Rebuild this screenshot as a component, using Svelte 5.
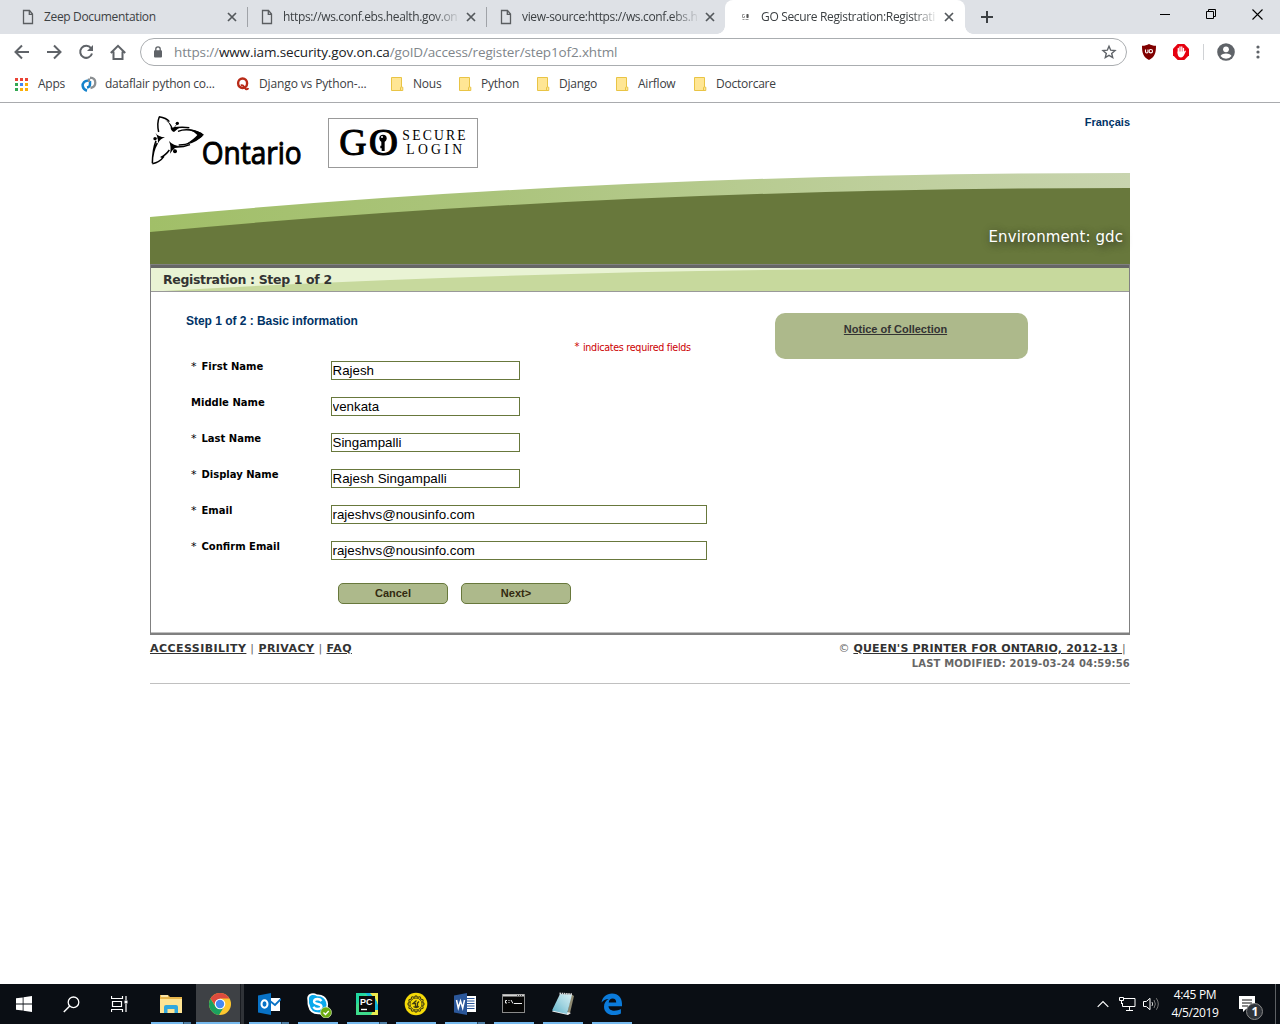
<script>
  const tabs = [
    { title: 'Zeep Documentation' },
    { title: 'https://ws.conf.ebs.health.gov.on' },
    { title: 'view-source:https://ws.conf.ebs.h' },
    { title: 'GO Secure Registration:Registrati', active: true }
  ];
  const folders = ['Nous', 'Python', 'Django', 'Airflow', 'Doctorcare'];
  const fields = [
    { label: 'First Name', required: true, value: 'Rajesh' },
    { label: 'Middle Name', required: false, value: 'venkata' },
    { label: 'Last Name', required: true, value: 'Singampalli' },
    { label: 'Display Name', required: true, value: 'Rajesh Singampalli' },
    { label: 'Email', required: true, value: 'rajeshvs@nousinfo.com', wide: true },
    { label: 'Confirm Email', required: true, value: 'rajeshvs@nousinfo.com', wide: true }
  ];
  const appDots = ['#ea4335', '#ea4335', '#ea4335', '#34a853', '#4285f4', '#fbaf08', '#34a853', '#fbaf08', '#fbaf08'];
  const rays = [0, 30, 60, 90, 120, 150, 180, 210, 240, 270, 300, 330];
</script>

<div class="screen">
  <header class="tabstrip">
    {#each tabs as tab}
      <div class="tab" class:active={tab.active}>
        {#if tab.active}
          <svg class="favicon" width="12" height="16" viewBox="0 0 12 16"><g fill="none" stroke="#999" stroke-width="1"><path d="M5.500 5.500H3.500v3H5.500V7M7.500 5.500h2v3h-2zM3.500 10.500h2m1 0h3" /></g><path d="M8 5h1v4H8z" fill="#555" /></svg>
        {:else}
          <svg class="favicon" width="12" height="16" viewBox="0 0 12 16"><path d="M1.500 1.500h6l3 3.500v9.500h-9zM7.300 1.800v3.500h3.200" fill="none" stroke="#5a5d60" stroke-width="1.300" /></svg>
        {/if}
        <span class="tab-title" class:long={tab.title.length > 30}>{tab.title}</span>
        <svg class="tab-close" width="10" height="10" viewBox="0 0 10 10"><path d="M1 1l8 8M9 1l-8 8" stroke="#54585c" stroke-width="1.700" /></svg>
      </div>
    {/each}
    <svg class="new-tab" width="14" height="14" viewBox="0 0 14 14"><path d="M7 1v12M1 7h12" stroke="#3c4043" stroke-width="2" /></svg>
    <div class="window-controls">
      <svg width="11" height="11" viewBox="0 0 11 11"><path d="M0 5.500h10" stroke="#000" /></svg>
      <svg width="11" height="11" viewBox="0 0 11 11"><path d="M.5 2.500h7v7h-7zM2.500 2.500v-2h7v7h-2" fill="none" stroke="#000" /></svg>
      <svg width="11" height="11" viewBox="0 0 11 11"><path d="M.5.5l10 10M10.500.5l-10 10" stroke="#000" stroke-width="1.100" /></svg>
    </div>
  </header>

  <div class="toolbar">
    <svg width="16" height="16" viewBox="0 0 16 16"><path d="M15 8H2M8 1.500L1.500 8 8 14.500" class="nav" /></svg>
    <svg width="16" height="16" viewBox="0 0 16 16"><path d="M1 8h13M8 1.500L14.500 8 8 14.500" class="nav" /></svg>
    <svg width="16" height="16" viewBox="0 0 16 16"><path d="M13 4.200A6 6 0 1 0 14 9.500" class="nav" /><path d="M15 1v6H9z" fill="#5f6368" /></svg>
    <svg width="16" height="16" viewBox="0 0 16 16"><path d="M.8 9L8 1.800 15.200 9M3.500 7.500V15h9V7.500" class="nav" /></svg>
    <div class="omnibox">
      <svg width="10" height="12" viewBox="0 0 10 12"><rect x="1" y="4.300" width="8" height="7.200" rx="1" fill="#5f6368" /><path d="M2.800 5V3a2.200 2.200 0 0 1 4.400 0v2" fill="none" stroke="#5f6368" stroke-width="1.300" /></svg>
      <span class="url">https://<b>www.iam.security.gov.on.ca</b>/goID/access/register/step1of2.xhtml</span>
      <svg class="star" width="16" height="16" viewBox="0 0 16 16"><path d="M8 2.200l1.700 4 4.300.4-3.300 2.800 1 4.200L8 11.400l-3.700 2.200 1-4.200L2 6.600l4.300-.4z" fill="none" stroke="#5f6368" stroke-width="1.400" /></svg>
    </div>
    <div class="extensions">
      <svg width="16" height="16" viewBox="0 0 16 16"><path d="M8 0c2 1.200 4 1.700 7 1.800 0 7-1 11.200-7 14.200C2 13 1 8.800 1 1.800 4 1.700 6 1.200 8 0z" fill="#800000" /><path d="M4.500 5.500v2.300q0 1.200 1.300 1.200T7 7.800V5.500" fill="none" stroke="#fff" stroke-width="1.100" /><circle cx="9.800" cy="7.200" r="1.700" fill="none" stroke="#fff" stroke-width="1.100" /></svg>
      <svg width="16" height="16" viewBox="0 0 16 16"><path d="M4.700 0h6.600L16 4.700v6.600L11.300 16H4.700L0 11.300V4.700z" fill="#e6000f" /><path d="M5.300 9V4.500M7 8V3M8.800 8V3M10.500 9V4.500" stroke="#fff" stroke-width="1.300" stroke-linecap="round" /><path d="M4.600 7.500h6.600l1.200-1q.9.300.3 1.300l-2 4q-1 1.600-2.700 1.600-3 0-3.400-4z" fill="#fff" /></svg>
      <i class="divider"></i>
      <svg width="18" height="18" viewBox="0 0 18 18"><circle cx="9" cy="9" r="8.800" fill="#5f6368" /><circle cx="9" cy="6.300" r="2.900" fill="#fff" /><path d="M3.500 13q1-2.500 5.500-2.500t5.500 2.500q-2 2.700-5.500 2.700T3.500 13z" fill="#fff" /></svg>
      <svg width="4" height="14" viewBox="0 0 4 14"><g fill="#5f6368"><circle cx="2" cy="2" r="1.600" /><circle cx="2" cy="7" r="1.600" /><circle cx="2" cy="12" r="1.600" /></g></svg>
    </div>
  </div>

  <nav class="bookmarks">
    <div class="bookmark apps">
      <span class="grid">{#each appDots as color}<svg width="3" height="3"><rect width="3" height="3" fill={color} /></svg>{/each}</span>
      <span>Apps</span>
    </div>
    <div class="bookmark flair">
      <svg width="16" height="16" viewBox="0 0 16 16"><path d="M7 4.700A4.700 4.700 0 0 0 1.700 10Q2.200 13.500 6 14.800M6 11.500q3-.5 3-3.300V5" fill="none" stroke="#1583cc" stroke-width="2.500" /><path d="M9 1.700q5.300.3 5.300 5 0 4.300-4.800 5.300M8 2.500v3.500" fill="none" stroke="#8b8f92" stroke-width="2.300" /></svg>
      <span>dataflair python co...</span>
    </div>
    <div class="bookmark quora">
      <svg width="14" height="16" viewBox="0 0 14 16"><ellipse cx="6.600" cy="7.300" rx="4.500" ry="4.800" fill="none" stroke="#b92b18" stroke-width="2.400" /><path d="M4.800 9.500q2-.8 3.400 1.600 1.200 2.200 2.500 2.200 1.200 0 1.500-1.300" fill="none" stroke="#b92b18" stroke-width="1.900" /></svg>
      <span>Django vs Python-...</span>
    </div>
    {#each folders as name}
      <div class="bookmark folder {name.toLowerCase()}">
        <svg width="13" height="14" viewBox="0 0 13 14"><path d="M.5.5h10v9.700h1.300v3.300H.5z" fill="#ffe694" stroke="#e9c445" /><path d="M9.500 13v-2.500q.3-.8 1-.8" fill="none" stroke="#e9c445" /></svg>
        <span>{name}</span>
      </div>
    {/each}
  </nav>

  <main class="viewport">
    <div class="page">
      <div class="masthead">
        <svg class="logos" width="330" height="53" viewBox="30 33 990 159">
          <g fill="none" stroke="#000" stroke-width="4.500">
            <path d="M58 38q-8 20-2 46M57 38q22 3 31 15" />
            <path d="M100 72q22-4 48-1M114 82q32-12 72 8" />
            <path d="M116 123q36 1 70-27M104 129q22 2 46-7" />
            <path d="M48 110q-10 25-11 68M52 117q-15 25-15 60M37 179q22-4 35-22M62 160q15-6 26-22" />
          </g>
          <path d="M140 74q36 4 52 18-20 19-54 28 24-15 34-27-12-12-32-19z" />
          <path d="M76 48q16 8 22 23 12 2 24-2-12 7-20 15-11-5-10-16-4-12-16-20zM46 86q9 13 29 14-15 5-21 18 1-19-8-32zM87 111q13 15 35 16-20 1-32 22 5-19-3-38z" />
          <circle cx="112" cy="58" r="5" /><circle cx="45" cy="104" r="5" /><circle cx="105" cy="142" r="6" />
          <path d="M112 58l-10 14M45 104l17-4M105 142l-8-15" stroke="#000" stroke-width="2" />
          <text x="185" y="181" class="ontario" textLength="300" lengthAdjust="spacingAndGlyphs">Ontario</text>
          <rect x="565.500" y="43.500" width="447" height="147" fill="#fff" stroke="#999" stroke-width="3" />
          <text x="598" y="154" class="go" textLength="82" lengthAdjust="spacingAndGlyphs">G</text>
          <text x="686" y="154" class="go" textLength="88" lengthAdjust="spacingAndGlyphs">O</text>
          <circle cx="729" cy="103" r="11" /><path d="M724 103h10v38h-9v-8h-4v-8h3z" /><circle cx="726" cy="99" r="3" fill="#fff" />
          <text x="787" y="109" class="trajan" textLength="190">SECURE</text>
          <text x="799" y="151" class="trajan" textLength="167">LOGIN</text>
        </svg>
        <a class="lang" href="#fr">Français</a>
      </div>

      <div class="banner">
        <svg width="980" height="91" viewBox="0 0 980 91">
          <defs>
            <linearGradient id="sweep"><stop offset="0" stop-color="#a1bf68" /><stop offset=".35" stop-color="#abc47c" /><stop offset=".75" stop-color="#becf9c" /><stop offset="1" stop-color="#c8d4af" /></linearGradient>
          </defs>
          <path d="M0 44Q470 0 980 0V91H0z" fill="url(#sweep)" />
          <path d="M0 59Q470 15 980 15V91H0z" fill="#68783c" />
        </svg>
        <span class="environment">Environment: gdc</span>
      </div>

      <section class="panel">
        <div class="panel-title">
          <svg width="978" height="23" viewBox="0 0 978 23" preserveAspectRatio="none"><path d="M0 0H709V1Q340 4 12 23H0z" fill="#e9f3d4" /></svg>
          <h1>Registration : Step 1 of 2</h1>
        </div>
        <div class="panel-body">
          <div class="form">
            <h2>Step 1 of 2 : Basic information</h2>
            <p class="required-note"><sup>*</sup> indicates required fields</p>
            {#each fields as field}
              <div class="row">
                <span class="label">{#if field.required}<span class="mark">*</span>{/if}{field.label}</span>
                <input class:wide={field.wide} value={field.value} />
              </div>
            {/each}
            <div class="buttons">
              <button>Cancel</button>
              <button>Next&gt;</button>
            </div>
          </div>
          <aside class="notice"><a href="#notice">Notice of Collection</a></aside>
        </div>
      </section>

      <footer>
        <div class="links"><a href="#a">ACCESSIBILITY</a> | <a href="#p">PRIVACY</a> | <a href="#f">FAQ</a></div>
        <div class="legal">
          <div class="copy"><span class="sign">©</span> <a href="#c">QUEEN'S PRINTER FOR ONTARIO, 2012-13&nbsp;</a><span class="bar">|</span></div>
          <div class="modified">LAST MODIFIED: 2019-03-24 04:59:56</div>
        </div>
      </footer>
    </div>
  </main>

  <div class="taskbar">
    <div class="system">
      <svg width="16" height="16" viewBox="0 0 16 16"><path d="M0 2.300l6.700-.9v6.200H0zM7.500 1.200L16 0v7.600H7.500zM0 8.400h6.700v6.200L0 13.700zM7.500 8.400H16V16l-8.500-1.200z" fill="#fff" /></svg>
      <svg width="17" height="17" viewBox="0 0 17 17"><circle cx="10.500" cy="6.300" r="5.300" fill="none" stroke="#fff" stroke-width="1.300" /><path d="M6.800 10L.8 16" stroke="#fff" stroke-width="1.500" /></svg>
      <svg width="17" height="16" viewBox="0 0 17 16"><path d="M.5 0v2.500h11V0M.5 16v-2.500h11V16M1.500 5.500h9v5h-9zM15 0v4m0 4v8" fill="none" stroke="#fff" stroke-width="1.200" /><rect x="13.500" y="4.500" width="3" height="3" fill="#fff" /></svg>
    </div>
    <div class="programs">
      <div class="program many">
        <svg width="22" height="20" viewBox="0 0 22 20"><path d="M0 1h8l2 2h12v15H0z" fill="#e8b64c" /><path d="M0 5h22v14H0z" fill="#ffe493" /><path d="M1 2h7" stroke="#fff3c4" stroke-width="1.500" /><path d="M4 19v-6q0-2 2-2h10q2 0 2 2v6h-3.500v-4h-7v4z" fill="#32a8dd" /></svg>
      </div>
      <div class="program current many">
        <svg width="24" height="24" viewBox="0 0 24 24"><circle cx="12" cy="12" r="11" fill="#fdc62f" /><path d="M2.500 6.500A11 11 0 0 0 11 23l5.200-8.500H7.500z" fill="#1ba15f" /><path d="M12 6.500h9.500A11 11 0 0 0 2.500 6.500l4.700 7z" fill="#dd4b3e" /><circle cx="12" cy="12" r="5.300" fill="#fff" /><circle cx="12" cy="12" r="4.200" fill="#4689f2" /></svg>
      </div>
      <div class="program many">
        <svg width="24" height="24" viewBox="0 0 24 24"><path d="M12 6h11v13H12z" fill="#fff" /><path d="M13 9l5 4 6-6" fill="none" stroke="#0872c6" stroke-width="1.800" /><path d="M1 3.500L14 1v22L1 20.500z" fill="#0872c6" /><ellipse cx="7.500" cy="12" rx="3" ry="3.700" fill="none" stroke="#fff" stroke-width="2" /></svg>
      </div>
      <div class="program">
        <svg class="skype" width="26" height="26" viewBox="0 0 26 26"><path d="M1.500 9Q0 3 5 1.500 8 .5 11 2.500 19 2 21.500 9q1 3 .3 5.500 2 4-1.300 7-3 2.500-7 .8Q4 23 2 14q-.6-2-.5-5z" fill="#fff" /><path d="M3 8Q2.300 4 6 3q3-.5 5 1.300 7-.3 9 5.700 1 3 0 5 1.500 3-1 5.200-2.500 1.500-5 .3Q5 21 3.700 13 2.600 11 3 8z" fill="#0aa9ec" /><path d="M15.500 9Q14 7 11.500 7 8 7.200 8 9.500q0 1.800 3.700 2.500t3.800 2.600q-.3 2.400-4 2.400-3 0-4-2.300" fill="none" stroke="#fff" stroke-width="2.300" /><circle cx="20" cy="20.500" r="5.500" fill="#6cab12" stroke="#d7e8c0" stroke-width=".7" /><path d="M17.500 20.500l2 2 3.200-3.500" fill="none" stroke="#fff" stroke-width="1.300" /></svg>
      </div>
      <div class="program many">
        <svg width="22" height="22" viewBox="0 0 22 22"><path d="M0 0h22v22H0z" fill="#3fdc8c" /><path d="M0 0h10L0 12z" fill="#21d7a0" /><path d="M9 0h7l5 14-6-8z" fill="#11b8dc" /><path d="M14 0h8v10z" fill="#f0ea4b" /><path d="M22 8v14h-7l4-8z" fill="#e9ed51" /><path d="M19 5l3 7v5h-3z" fill="#11b8dc" /><rect x="3" y="3" width="16" height="16" fill="#0b0b0b" /><text x="4" y="11.500" class="pc">PC</text><path d="M5 16.500h6" stroke="#fff" stroke-width="1.400" /></svg>
      </div>
      <div class="program">
        <svg width="24" height="24" viewBox="0 0 24 24"><circle cx="12" cy="12" r="11.300" fill="#f5da08" /><g fill="none" stroke="#3f3a12"><circle cx="12" cy="12" r="6" stroke-width=".9" />{#each rays as angle}<path d="M10.300 5.500Q12 2.200 13.700 5.500" stroke-width="1.100" transform="rotate({angle} 12 12)" />{/each}<path d="M12.500 8.500l-3.500 3h2.500v3h2v-3.500l1.500-1.500M9.500 14.500q2.500 2 5.500 0" stroke-width="1.300" /></g></svg>
      </div>
      <div class="program many">
        <svg width="24" height="24" viewBox="0 0 24 24"><path d="M12 4h11v16H12z" fill="#fff" /><path d="M14 6.500h7.500M14 9h7.500M14 11.500h7.500M14 14h7.500M14 16.500h7.500" stroke="#2b579a" /><path d="M1 3.500L14 1v22L1 20.500z" fill="#2b579a" /><path d="M3.500 8l1.800 8L7.500 9l2.200 7 1.800-8" fill="none" stroke="#fff" stroke-width="1.500" /></svg>
      </div>
      <div class="program">
        <svg width="24" height="20" viewBox="0 0 24 20"><rect x=".5" y=".5" width="22" height="18" fill="#050505" stroke="#8a8a8a" /><path d="M1 1.500h21" stroke="#d3d3d3" stroke-width="2" /><path d="M15 1.500h6" stroke="#555" stroke-dasharray="1 1" /><path d="M5 6.500H3.500V9H5M7 6v1m0 1v1M9 6l2 3.500M12 9.500h8" fill="none" stroke="#eee" stroke-width="1" /></svg>
      </div>
      <div class="program">
        <svg width="24" height="24" viewBox="0 0 24 24"><defs><linearGradient id="pad" x1="0" y1="1" x2="1" y2="0"><stop offset="0" stop-color="#5cb0c8" /><stop offset=".5" stop-color="#a0d3e0" /><stop offset="1" stop-color="#d9f0f4" /></linearGradient></defs><path d="M20 2l3 2-4 17-3 2z" fill="#8f8a72" /><path d="M1 19.500L17 23l3-2L4 17z" fill="#eee" /><path d="M9 2l12 .5L16 22 1 18.500z" fill="url(#pad)" /><path d="M8.500 1.500L21 2.200" stroke="#d9d9d9" stroke-width="1.800" stroke-dasharray="1.500 .7" /></svg>
      </div>
      <div class="program">
        <svg width="22" height="22" viewBox="0 0 22 22"><path d="M.5 9.500C1.500 4 5.500.5 11 .5c6.500 0 10 4.700 10 10.200v2.600H7.500c.2 3 2.700 4.500 6 4.500 2.400 0 4.500-.6 6.400-1.700v4.300C18 21.500 15.500 22 12.500 22 7 22 3 18.800 3 13.700c0-3.400 1.700-6.200 4.800-7.700C4.500 6.200 2 7.500.5 9.500zM7.700 9.500h7.500c0-2.500-1.300-3.900-3.600-3.900-2.200 0-3.500 1.500-3.900 3.900z" fill="#0b7bdb" /></svg>
      </div>
    </div>
    <div class="tray">
      <svg width="12" height="8" viewBox="0 0 12 8"><path d="M.7 6.800L6 1.500l5.300 5.300" fill="none" stroke="#fff" stroke-width="1.200" /></svg>
      <svg width="17" height="14" viewBox="0 0 17 14"><path d="M5 1.500h11v8H3.500V6M7 13.500h7M10.500 9.500v4M.5.5h4v3h-4zM2.500 3.500V7" fill="none" stroke="#fff" /></svg>
      <svg width="17" height="14" viewBox="0 0 17 14"><path d="M.5 4.500h2.800L7 1.300v11.400L3.300 9.500H.5z" fill="none" stroke="#fff" /><path d="M9 5q1.300 2 0 4" fill="none" stroke="#ccc" /><path d="M11 3q2.700 4 0 8M13.300 1.200q4 5.800 0 11.600" fill="none" stroke="#777" /></svg>
      <div class="clock"><span>4:45 PM</span><span>4/5/2019</span></div>
      <svg class="action" width="25" height="25" viewBox="0 0 25 25"><path d="M0 0h16v13H7l-3 3v-3H0z" fill="#fff" /><path d="M3 4h10M3 7h10M3 10h6" stroke="#111" /><circle cx="15.500" cy="15.500" r="8" fill="#30343a" stroke="#888" /><text x="12.500" y="20" class="count">1</text></svg>
      <i class="peek"></i>
    </div>
  </div>
</div>

<style>
  :global(body) { margin: 0; background: #fff; overflow: hidden; }
  .screen { width: 1280px; height: 1024px; display: flex; flex-direction: column; background: #fff; font-family: "Open Sans", "Noto Sans", sans-serif; }
  svg { display: block; flex: none; }
  a { color: inherit; }

  .tabstrip { height: 34px; box-sizing: border-box; background: #dee1e6; display: flex; align-items: flex-start; padding-left: 8px; }
  .tab { position: relative; width: 239px; height: 34px; box-sizing: border-box; display: flex; align-items: center; padding-left: 14px; }
  .tab:nth-child(-n+2)::after { content: ""; position: absolute; right: -1px; top: 7px; width: 1px; height: 20px; background: #a0a3a8; }
  .tab.active { width: 240px; background: #fff; border-radius: 8px 8px 0 0; }
  .tab.active::before, .tab.active::after { content: ""; position: absolute; bottom: 0; width: 8px; height: 8px; }
  .tab.active::before { left: -8px; background: radial-gradient(circle at 0 0, transparent 7.500px, #fff 8px); }
  .tab.active::after { right: -8px; background: radial-gradient(circle at 100% 0, transparent 7.500px, #fff 8px); }
  .tab-title { width: 178px; margin-left: 10px; font-size: 12px; letter-spacing: -.34px; line-height: 16px; color: #3c4043; white-space: nowrap; }
  .tab-title.long { -webkit-mask-image: linear-gradient(90deg, #000 150px, transparent 178px); mask-image: linear-gradient(90deg, #000 150px, transparent 178px); }
  .tab-close { margin-left: 5px; }
  .new-tab { margin: 10px 0 0 15px; }
  .window-controls { display: flex; margin: 9px 17px 0 auto; gap: 35px; }

  .toolbar { height: 36px; display: flex; align-items: center; padding-left: 14px; gap: 16px; }
  .nav { fill: none; stroke: #5f6368; stroke-width: 2; }
  .omnibox { width: 987px; height: 28px; box-sizing: border-box; margin-left: -2px; border: 1px solid #aaadb0; border-radius: 14px; display: flex; align-items: center; padding: 0 9px 0 12px; }
  .url { margin-left: 11px; font-size: 13.500px; line-height: 20px; letter-spacing: -.14px; color: #80868b; }
  .url b { font-weight: 400; color: #202124; }
  .star { margin-left: auto; }
  .extensions { display: flex; align-items: center; margin-left: -2px; }
  .extensions svg + svg { margin-left: 16px; }
  .divider { width: 1px; height: 16px; margin: 0 13px 0 14px; background: #d0d2d5; }
  .extensions svg:last-child { margin-left: 21px; }

  .bookmarks { height: 27px; border-bottom: 1px solid #a9abae; display: flex; padding: 5px 0 0 15px; font-size: 12px; letter-spacing: -.24px; line-height: 18px; color: #3c4043; }
  .bookmark { display: flex; height: 18px; align-items: center; white-space: nowrap; flex: none; }
  .apps { width: 66px; gap: 10px; }
  .grid { display: grid; grid-template-columns: repeat(3, 3px); gap: 2px; }
  .flair { width: 155px; gap: 8px; }
  .quora { width: 155px; gap: 9px; letter-spacing: -.13px; }
  .folder { gap: 9px; }
  .nous { width: 68px; }
  .python { width: 78px; }
  .django { width: 79px; }
  .airflow { width: 78px; }

  .viewport { flex: 1; display: flex; justify-content: center; }
  .page { width: 980px; font-family: Verdana, "DejaVu Sans", sans-serif; }
  .masthead { height: 58px; padding-top: 12px; display: flex; justify-content: space-between; }
  .logos { overflow: visible; }
  .ontario { font: 400 92px "Open Sans", sans-serif; stroke: #000; stroke-width: 3px; }
  .go { font: 400 114px "Liberation Serif", serif; stroke: #000; stroke-width: 3px; }
  .trajan { font: 41px "Liberation Serif", serif; }
  .lang { font: 700 11px/14px "Liberation Sans", Arial, sans-serif; color: #003366; text-decoration: none; }
  .banner { height: 91px; position: relative; }
  .environment { position: absolute; right: 7px; top: 54px; font-size: 15px; letter-spacing: .1px; line-height: 20px; color: #fff; text-shadow: 2px 2px 8px #222; }

  .panel { border: 1px solid #808080; border-bottom: 2px solid #808080; height: 368px; }
  .panel-title { position: relative; height: 23px; border-top: 3px solid #666; border-bottom: 1px solid #999; background: #c7d99d; }
  .panel-title svg { position: absolute; inset: 0; }
  .panel-title h1 { position: relative; margin: 0; padding-left: 12px; font-size: 12.500px; letter-spacing: -.34px; line-height: 23px; color: #333; }
  .panel-body { height: 341px; box-sizing: border-box; border-bottom: 1px solid #c0c0c0; display: flex; padding: 21px 0 0 35px; }
  .form { width: 589px; }
  h2 { margin: 0; font: 700 12px/16px "Liberation Sans", Arial, sans-serif; letter-spacing: -.03px; color: #003366; }
  .required-note { margin: 9px 0 0 388.500px; font-size: 9.600px; letter-spacing: -.3px; line-height: 20px; height: 20px; color: #c00; white-space: nowrap; }
  .required-note sup { font-size: 10px; line-height: 0; vertical-align: 1px; margin-right: 1px; }
  .row { height: 36px; display: flex; align-items: flex-start; padding-left: 5px; box-sizing: border-box; }
  .required-note + .row { margin-top: 3px; }
  .label { width: 140px; flex: none; font-size: 10px; font-weight: 700; line-height: 12px; color: #000; white-space: nowrap; }
  .mark { font-weight: 400; font-size: 11px; line-height: 0; display: inline-block; width: 10.500px; }
  input { width: 189px; height: 19px; box-sizing: border-box; border: 1px solid #68783c; padding: 0 0 0 .5px; margin: 0; font: 13.333px "Liberation Sans", Arial, sans-serif; color: #000; background: #fff; }
  input.wide { width: 376px; }
  .buttons { display: flex; gap: 13px; margin: 6px 0 0 152px; }
  button { width: 110px; height: 21px; padding: 0 0 2px 0; border: 1px solid #68783c; border-radius: 5px; background: #adb98b; font: 700 11px "Liberation Sans", Arial, sans-serif; color: #332a10; }
  .notice { width: 253px; height: 46px; box-sizing: border-box; border-radius: 10px; background: #adb98b; padding: 9px 12px 0 0; text-align: center; font: 700 11px/14px "Liberation Sans", Arial, sans-serif; color: #333; }

  footer { display: flex; justify-content: space-between; height: 48px; border-bottom: 1px solid #c0c0c0; font-size: 11px; color: #666; }
  footer a { font-weight: 700; color: #333; }
  .links { line-height: 16px; padding-top: 6px; letter-spacing: .44px; }
  .legal { text-align: right; padding-top: 6px; line-height: 16px; }
  .copy { padding-right: 4px; letter-spacing: .19px; }
  .modified { font-size: 10px; letter-spacing: .17px; line-height: 14px; font-weight: 700; }

  .taskbar { height: 40px; flex: none; display: flex; background: #0a0e14; color: #fff; }
  .system { display: flex; align-items: center; padding-left: 16px; gap: 31px; box-sizing: border-box; width: 151px; }
  .programs { display: flex; gap: 9px; }
  .program { width: 40px; height: 40px; box-sizing: border-box; border-bottom: 2px solid #76b9ed; display: flex; align-items: center; justify-content: center; padding-top: 1px; position: relative; }
  .program.many::after { content: ""; position: absolute; right: 0; bottom: -2px; width: 8px; height: 2px; background: #4f7fa6; border-left: 1px solid #2e4a60; box-sizing: border-box; }
  .program.current { width: 48px; margin: 0 -4px; background: #3e4145; }
  .program.current::after { width: 4px; height: 40px; background: #303338; border-left: 1px solid #181b20; }
  .skype { margin: 2px 0 0 2px; }
  .pc { font: 700 9px "Liberation Sans", sans-serif; fill: #fff; }
  .tray { margin-left: auto; display: flex; align-items: center; }
  .tray svg + svg { margin-left: 10px; }
  .tray svg:nth-child(3) { margin-left: 7px; }
  .clock { width: 60px; margin-left: 5px; display: flex; flex-direction: column; align-items: center; font-size: 12px; letter-spacing: -.35px; line-height: 18px; white-space: nowrap; padding-bottom: 1px; }
  .action { margin: 8px 0 0 14px; }
  .count { font: 700 12px "Open Sans", sans-serif; fill: #fff; }
  .peek { width: 1px; height: 40px; margin: 0 4px 0 11px; background: #5d6064; }
</style>
